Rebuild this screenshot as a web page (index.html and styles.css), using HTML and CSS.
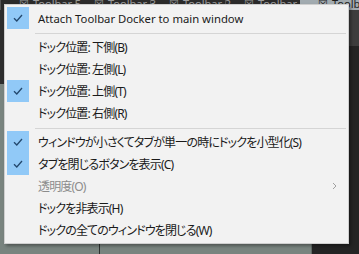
FILE: index.html
```html
<!DOCTYPE html>
<html lang="ja">
<head>
    <meta charset="UTF-8">
    <title>Docker menu</title>
    <link rel="stylesheet" href="styles.css">
</head>
<body>
    <div class="app">
        <div class="tabbar">
            <div class="tab"><span class="tab-box">&#x2612;</span>Toolbar 5</div>
            <div class="tab"><span class="tab-box">&#x2612;</span>Toolbar 3</div>
            <div class="tab"><span class="tab-box">&#x2612;</span>Toolbar 2</div>
            <div class="tab"><span class="tab-box">&#x2612;</span>Toolbar 4</div>
            <div class="tab tab-active"><span class="tab-box">&#x2612;</span>Toolbar 1</div>
        </div>
        <div class="workspace">
            <div class="canvas">
                <div class="canvas-top"></div>
                <div class="canvas-main"></div>
            </div>
            <div class="side">
                <div class="side-top"></div>
                <div class="side-main"></div>
            </div>
        </div>
    </div>

    <div class="menu">
        <div class="item checked">
            <span class="check"><svg width="10" height="8" viewBox="0 0 10 8"><path d="M1 4.2 L3.8 7 L9 1" fill="none" stroke="#23486d" stroke-width="1.3"/></svg></span>
            <span class="label latin">Attach Toolbar Docker to main window</span>
        </div>
        <div class="sep"></div>
        <div class="item">
            <span class="check"></span>
            <span class="label">ドック位置: 下側(B)</span>
        </div>
        <div class="item">
            <span class="check"></span>
            <span class="label">ドック位置: 左側(L)</span>
        </div>
        <div class="item checked">
            <span class="check"><svg width="10" height="8" viewBox="0 0 10 8"><path d="M1 4.2 L3.8 7 L9 1" fill="none" stroke="#23486d" stroke-width="1.3"/></svg></span>
            <span class="label">ドック位置: 上側(T)</span>
        </div>
        <div class="item">
            <span class="check"></span>
            <span class="label">ドック位置: 右側(R)</span>
        </div>
        <div class="sep"></div>
        <div class="item checked">
            <span class="check"><svg width="10" height="8" viewBox="0 0 10 8"><path d="M1 4.2 L3.8 7 L9 1" fill="none" stroke="#23486d" stroke-width="1.3"/></svg></span>
            <span class="label">ウィンドウが小さくてタブが単一の時にドックを小型化(S)</span>
        </div>
        <div class="item checked">
            <span class="check"><svg width="10" height="8" viewBox="0 0 10 8"><path d="M1 4.2 L3.8 7 L9 1" fill="none" stroke="#23486d" stroke-width="1.3"/></svg></span>
            <span class="label">タブを閉じるボタンを表示(C)</span>
        </div>
        <div class="item disabled">
            <span class="check"></span>
            <span class="label">透明度(O)</span>
            <svg class="arrow" width="5" height="8" viewBox="0 0 5 8"><path d="M1 1 L4 4 L1 7" fill="none" stroke="#a0a0a0" stroke-width="1"/></svg>
        </div>
        <div class="item">
            <span class="check"></span>
            <span class="label">ドックを非表示(H)</span>
        </div>
        <div class="item">
            <span class="check"></span>
            <span class="label">ドックの全てのウィンドウを閉じる(W)</span>
        </div>
    </div>
</body>
</html>
```

FILE: styles.css
```css
* {
    margin: 0;
    padding: 0;
    box-sizing: border-box;
}

body {
    width: 359px;
    height: 254px;
    overflow: hidden;
    position: relative;
    background-color: #252525;
    font-family: "Noto Sans", "Noto Sans CJK JP", sans-serif;
}

/* 背景のアプリ */
.app {
    display: flex;
    flex-direction: column;
    height: 100%;
}

.tabbar {
    display: flex;
    height: 10px;
    background-color: #2b2b2b;
    overflow: hidden;
}

.tab {
    width: 75px;
    padding-left: 18px;
    margin-top: -3px;
    font-size: 11px;
    line-height: 14px;
    color: #9c9c9c;
    white-space: nowrap;
    border-left: 1px solid #555;
}

.tab-active {
    flex: 1;
    background-color: #a2abb0;
    color: #1e1e1e;
    border-left: none;
}

.tab-box {
    margin-right: 4px;
}

.workspace {
    flex: 1;
    display: grid;
    grid-template-columns: 312px 1fr;
}

.canvas,
.side {
    display: flex;
    flex-direction: column;
}

.canvas-top {
    height: 74px;
    background-color: #2d2d2d;
}

.canvas-main {
    flex: 1;
    background-color: #79847f;
    border-right: 1px solid #5f6864;
    background-image: linear-gradient(to right, transparent 99px, #2e3230 99px, #2e3230 100px, transparent 100px);
}

.side-top {
    height: 36px;
    background-color: #3d3d3d;
}

.side-main {
    flex: 1;
    background-color: #242424;
}

/* コンテキストメニュー */
.menu {
    position: absolute;
    left: 4px;
    top: 4px;
    width: 345px;
    padding: 2px;
    background-color: #f2f2f2;
    border: 1px solid #cfcfcf;
    box-shadow: 2px 2px 3px rgba(0, 0, 0, 0.35);
    color: #1a1a1a;
}

.item {
    display: flex;
    align-items: center;
    height: 22px;
    font-size: 12px;
    font-feature-settings: "palt";
    white-space: nowrap;
}

.check {
    width: 22px;
    height: 22px;
    margin-right: 9px;
    display: flex;
    align-items: center;
    justify-content: center;
}

.checked .check {
    background-color: #91c9f7;
}

.label {
    flex: 1;
    letter-spacing: -0.85px;
}

.latin {
    font-size: 11.3px;
    letter-spacing: 0;
}

.disabled {
    color: #8c8c8c;
}

.arrow {
    margin-right: 9px;
}

.sep {
    height: 7px;
    margin-left: 28px;
    padding-top: 4px;
}

.sep::before {
    content: "";
    display: block;
    height: 1px;
    background-color: #d5d5d5;
}
```
